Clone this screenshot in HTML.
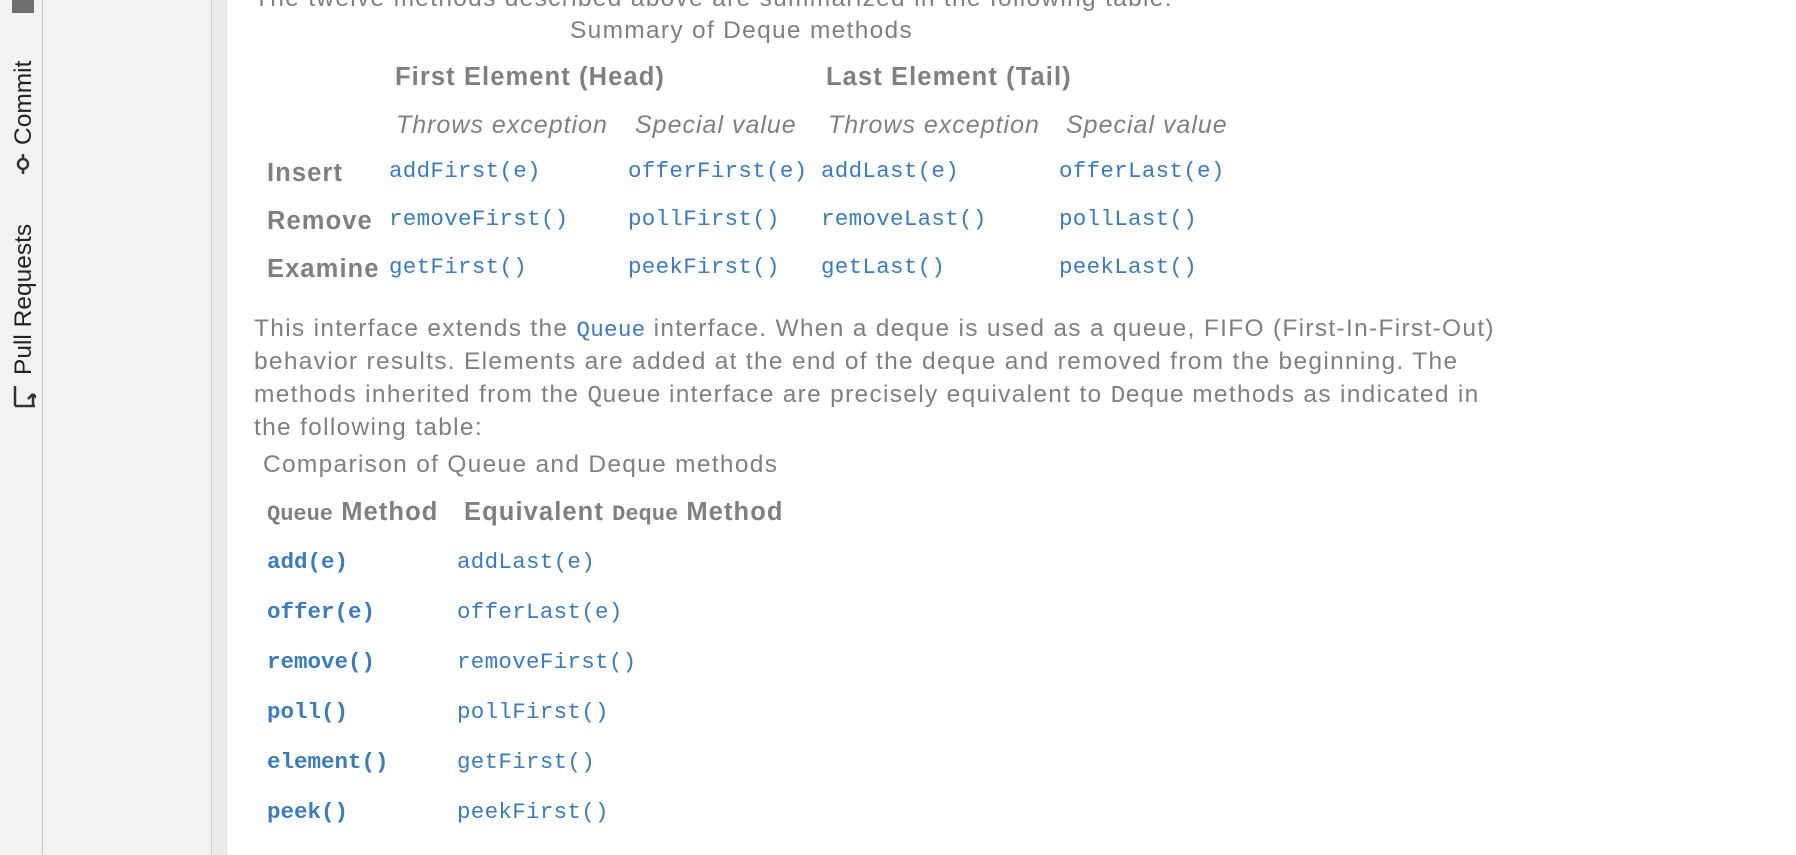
<!DOCTYPE html>
<html><head><meta charset="utf-8"><style>
body{margin:0;width:1796px;height:855px;overflow:hidden;background:#fff;position:relative;font-family:"Liberation Sans",sans-serif;color:#808080}
.a{position:absolute;white-space:nowrap}
.s{font-size:24.5px;letter-spacing:1.3px}
.b{font-weight:bold;font-size:25.5px;letter-spacing:1.1px}
.i{font-style:italic;font-size:25px;letter-spacing:1px}
.m{font-family:"Liberation Mono",monospace;font-size:22.5px;color:#3b7bbf;letter-spacing:0.3px}
.mb{font-family:"Liberation Mono",monospace;font-size:22.5px;color:#3b7bbf;font-weight:bold}
.mg{font-family:"Liberation Mono",monospace;color:#808080;letter-spacing:0}
.v{position:absolute;transform:rotate(-90deg);transform-origin:left top;font-size:24.5px;color:#222;white-space:nowrap}
</style></head><body>
<div class="a" style="left:0;top:0;width:42px;height:855px;background:#f2f2f2;border-right:1px solid #c8c8c8"></div>
<div class="a" style="left:43px;top:0;width:168px;height:855px;background:#f2f2f2;border-right:1px solid #d0d0d0"></div>
<div class="a" style="left:212px;top:0;width:14px;height:855px;background:#ebebeb;border-right:1px solid #e0e0e0"></div>
<div class="a" style="left:12px;top:0;width:22px;height:13px;background:#6e6e6e"></div>
<div class="v" style="left:10px;top:145px">Commit</div>
<svg class="a" style="left:11px;top:154px" width="24" height="20" viewBox="0 0 24 20"><circle cx="12" cy="10" r="5" fill="none" stroke="#333" stroke-width="2.5"/><line x1="12" y1="0" x2="12" y2="5" stroke="#333" stroke-width="2.5"/><line x1="12" y1="15" x2="12" y2="20" stroke="#333" stroke-width="2.5"/></svg>
<div class="v" style="left:10px;top:375px">Pull Requests</div>
<svg class="a" style="left:12px;top:384px" width="24" height="24" viewBox="0 0 24 24"><path d="M3 2v20M3 22h20M21 22V10M21 10l-5 5M21 10l5 5" fill="none" stroke="#333" stroke-width="2.5"/></svg>

<div class="a s" style="left:254px;top:-15px">The twelve methods described above are summarized in the following table:</div>
<div class="a s" style="left:570px;top:17px">Summary of Deque methods</div>
<div class="a b" style="left:395px;top:63px">First Element (Head)</div>
<div class="a b" style="left:826px;top:63px">Last Element (Tail)</div>
<div class="a i" style="left:396px;top:111px">Throws exception</div>
<div class="a i" style="left:635px;top:111px">Special value</div>
<div class="a i" style="left:828px;top:111px">Throws exception</div>
<div class="a i" style="left:1066px;top:111px">Special value</div>

<div class="a b" style="left:267px;top:159px">Insert</div>
<div class="a b" style="left:267px;top:207px">Remove</div>
<div class="a b" style="left:267px;top:255px">Examine</div>
<div class="a m" style="left:389px;top:158px">addFirst(e)</div>
<div class="a m" style="left:628px;top:158px">offerFirst(e)</div>
<div class="a m" style="left:821px;top:158px">addLast(e)</div>
<div class="a m" style="left:1059px;top:158px">offerLast(e)</div>
<div class="a m" style="left:389px;top:206px">removeFirst()</div>
<div class="a m" style="left:628px;top:206px">pollFirst()</div>
<div class="a m" style="left:821px;top:206px">removeLast()</div>
<div class="a m" style="left:1059px;top:206px">pollLast()</div>
<div class="a m" style="left:389px;top:254px">getFirst()</div>
<div class="a m" style="left:628px;top:254px">peekFirst()</div>
<div class="a m" style="left:821px;top:254px">getLast()</div>
<div class="a m" style="left:1059px;top:254px">peekLast()</div>

<div class="a s" style="left:254px;top:315px">This interface extends the <span class="m">Queue</span> interface. When a deque is used as a queue, FIFO (First-In-First-Out)</div>
<div class="a s" style="left:254px;top:348px">behavior results. Elements are added at the end of the deque and removed from the beginning. The</div>
<div class="a s" style="left:254px;top:381px">methods inherited from the <span class="mg">Queue</span> interface are precisely equivalent to <span class="mg">Deque</span> methods as indicated in</div>
<div class="a s" style="left:254px;top:414px">the following table:</div>
<div class="a s" style="left:263px;top:451px">Comparison of Queue and Deque methods</div>
<div class="a b" style="left:267px;top:498px"><span class="mg" style="font-size:22px">Queue</span> Method</div>
<div class="a b" style="left:464px;top:498px">Equivalent <span class="mg" style="font-size:22px">Deque</span> Method</div>

<div class="a mb" style="left:267px;top:549px">add(e)</div>
<div class="a mb" style="left:267px;top:599px">offer(e)</div>
<div class="a mb" style="left:267px;top:649px">remove()</div>
<div class="a mb" style="left:267px;top:699px">poll()</div>
<div class="a mb" style="left:267px;top:749px">element()</div>
<div class="a mb" style="left:267px;top:799px">peek()</div>
<div class="a m" style="left:457px;top:549px">addLast(e)</div>
<div class="a m" style="left:457px;top:599px">offerLast(e)</div>
<div class="a m" style="left:457px;top:649px">removeFirst()</div>
<div class="a m" style="left:457px;top:699px">pollFirst()</div>
<div class="a m" style="left:457px;top:749px">getFirst()</div>
<div class="a m" style="left:457px;top:799px">peekFirst()</div>
</body></html>
